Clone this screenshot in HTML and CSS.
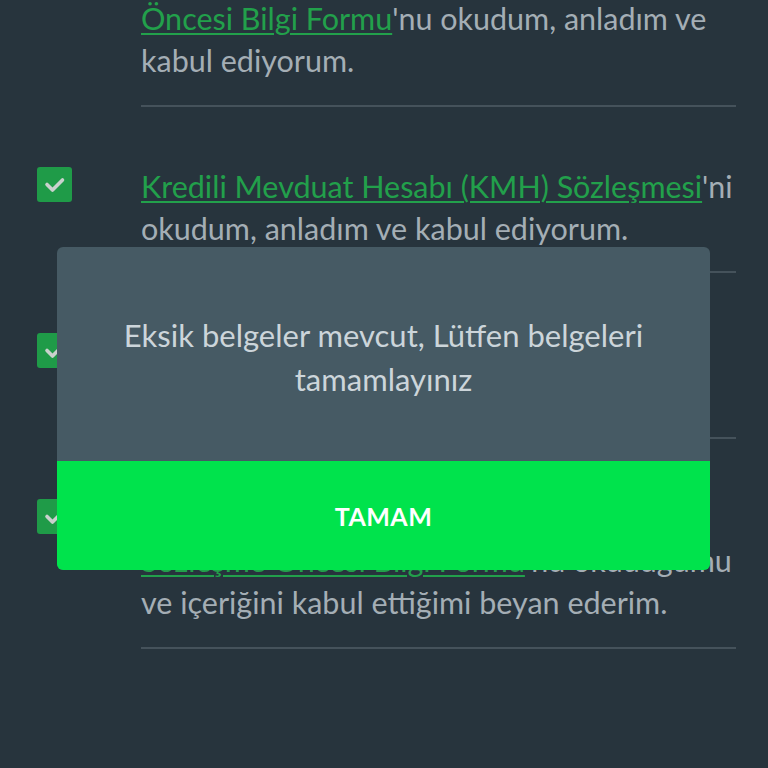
FILE: index.html
```html
<!DOCTYPE html>
<html lang="tr">
<head>
<meta charset="utf-8">
<title>Sözleşmeler</title>
<link rel="stylesheet" href="styles.css">
</head>
<body>
<div class="screen">
  <ul class="agreements">
    <li class="item item--cut">
      <span class="check check--hidden"></span>
      <p class="item-text"><a href="#" class="doc-link">Öncesi Bilgi Formu</a>'nu okudum, anladım ve<br>kabul ediyorum.</p>
    </li>
    <li class="item">
      <span class="check"><svg viewBox="0 0 35 35" class="check-icon"><path d="M10 17.5 L15.5 23 L25.5 13"/></svg></span>
      <p class="item-text"><a href="#" class="doc-link">Kredili Mevduat Hesabı (KMH) Sözleşmesi</a>'ni<br>okudum, anladım ve kabul ediyorum.</p>
    </li>
    <li class="item">
      <span class="check"><svg viewBox="0 0 35 35" class="check-icon"><path d="M10 17.5 L15.5 23 L25.5 13"/></svg></span>
      <p class="item-text"><a href="#" class="doc-link">Hesap Cüzdanı</a>'nı okudum, anladım<br>ve kabul ediyorum.</p>
    </li>
    <li class="item">
      <span class="check"><svg viewBox="0 0 35 35" class="check-icon"><path d="M10 17.5 L15.5 23 L25.5 13"/></svg></span>
      <p class="item-text"><a href="#" class="doc-link">Bankacılık Hizmetleri Sözleşmesi</a>'ni ve<br><a href="#" class="doc-link">Sözleşme Öncesi Bilgi Formu</a>'nu okuduğumu<br>ve içeriğini kabul ettiğimi beyan ederim.</p>
    </li>
  </ul>

  <div class="dialog" role="dialog">
    <div class="dialog-body">
      <p class="dialog-message">Eksik belgeler mevcut, Lütfen belgeleri<br>tamamlayınız</p>
    </div>
    <button class="dialog-button">TAMAM</button>
  </div>
</div>
</body>
</html>
```

FILE: styles.css
```css
* { box-sizing: border-box; }

html, body {
  margin: 0;
  padding: 0;
}

body {
  background: #27343d;
  font-family: "Lato", "Noto Sans", sans-serif;
  color: #a4aeb5;
}

.screen {
  position: relative;
  width: 768px;
  height: 768px;
  overflow: hidden;
}

.agreements {
  list-style: none;
  margin: -3px 0 0 0;
  padding: 0 32px 0 37px;
}

.item {
  display: flex;
  align-items: flex-start;
  gap: 69px;
}

.check {
  flex: 0 0 35px;
  width: 35px;
  height: 35px;
  margin-top: 60px;
  border-radius: 3px;
  background: #1f9b48;
  display: flex;
}

.check--hidden { visibility: hidden; margin-top: 0; }

.check-icon {
  width: 35px;
  height: 35px;
  fill: none;
  stroke: #c9d1cd;
  stroke-width: 3.6;
  stroke-linecap: round;
  stroke-linejoin: round;
}

.item-text {
  flex: 1;
  margin: 0;
  padding: 58px 0 22px;
  font-size: 30.5px;
  line-height: 42px;
  white-space: nowrap;
  border-bottom: 2px solid #45525b;
}

.item--cut .item-text { padding-top: 0; padding-bottom: 24px; }

.item:last-child .item-text { padding-bottom: 24px; }

.doc-link {
  color: #22a04b;
  text-decoration: underline;
  text-underline-offset: 3px;
  text-decoration-thickness: 2px;
}

.dialog {
  position: absolute;
  left: 57px;
  top: 247px;
  width: 653px;
  height: 323px;
  border-radius: 6px;
  overflow: hidden;
  display: flex;
  flex-direction: column;
  background: #465a64;
}

.dialog-body {
  flex: 1;
  display: flex;
  align-items: center;
  justify-content: center;
  padding: 6px 30px 0;
}

.dialog-message {
  margin: 0;
  text-align: center;
  font-size: 31px;
  line-height: 44px;
  color: #ccd5da;
}

.dialog-button {
  height: 109px;
  border: 0;
  margin: 0;
  background: #00e34c;
  color: #ffffff;
  font-family: "Lato", "Noto Sans", sans-serif;
  font-weight: 700;
  font-size: 25px;
  letter-spacing: 0.5px;
  cursor: pointer;
}
```
